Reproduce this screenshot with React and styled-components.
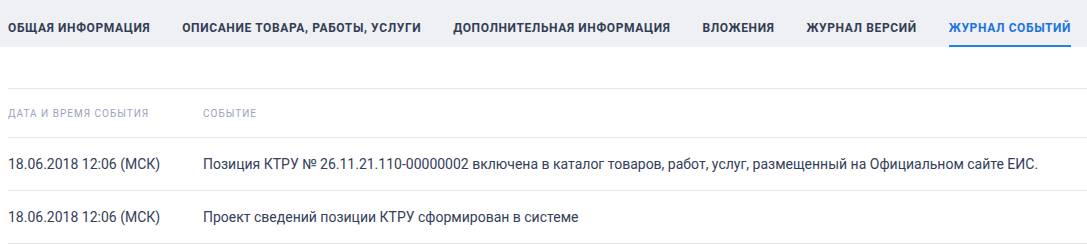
import styled, { createGlobalStyle } from 'styled-components';

const GlobalStyle = createGlobalStyle`
  body {
    margin: 0;
    background: #fff;
    font-family: Roboto, "Liberation Sans", sans-serif;
  }
`;

const tabs = [
  'Общая информация',
  'Описание товара, работы, услуги',
  'Дополнительная информация',
  'Вложения',
  'Журнал версий',
  'Журнал событий',
];

const events = [
  {
    date: '18.06.2018 12:06 (МСК)',
    text: 'Позиция КТРУ № 26.11.21.110-00000002 включена в каталог товаров, работ, услуг, размещенный на Официальном сайте ЕИС.',
  },
  {
    date: '18.06.2018 12:06 (МСК)',
    text: 'Проект сведений позиции КТРУ сформирован в системе',
  },
];

function App() {
  return (
    <>
      <GlobalStyle />
      <TabBar>
        {tabs.map((t, i) => (
          <Tab key={t} $active={i === tabs.length - 1}>{t}</Tab>
        ))}
      </TabBar>
      <Table>
        <HeadRow>
          <HeadCell>Дата и время события</HeadCell>
          <HeadCell>Событие</HeadCell>
        </HeadRow>
        {events.map((e, i) => (
          <Row key={i}>
            <Cell>{e.date}</Cell>
            <Cell>{e.text}</Cell>
          </Row>
        ))}
      </Table>
    </>
  );
}

const TabBar = styled.div`
  display: flex;
  align-items: stretch;
  height: 47px;
  padding-left: 8px;
  background: #eef0f3;
`;

const Tab = styled.div`
  display: flex;
  align-items: center;
  margin-right: 32px;
  padding-top: 11px;
  box-sizing: border-box;
  font-size: 12px;
  font-weight: 700;
  letter-spacing: 0.62px;
  text-transform: uppercase;
  color: ${(p) => (p.$active ? '#1a73e0' : '#333d55')};
  border-bottom: 2px solid ${(p) => (p.$active ? '#1f84dc' : 'transparent')};
  white-space: nowrap;
`;

const Table = styled.div`
  margin: 41px 0 0 8px;
  border-top: 1px solid #e4e5f0;
`;

const HeadRow = styled.div`
  display: grid;
  grid-template-columns: 195px 1fr;
  height: 48px;
  align-items: center;
  border-bottom: 1px solid #e4e5f0;
`;

const HeadCell = styled.div`
  font-size: 10px;
  letter-spacing: 1px;
  text-transform: uppercase;
  color: #9aa3bd;
`;

const Row = styled.div`
  display: grid;
  grid-template-columns: 195px 1fr;
  height: 52px;
  align-items: center;
  border-bottom: 1px solid #e4e5f0;
`;

const Cell = styled.div`
  font-size: 14px;
  color: #34405a;
`;

export default App;
